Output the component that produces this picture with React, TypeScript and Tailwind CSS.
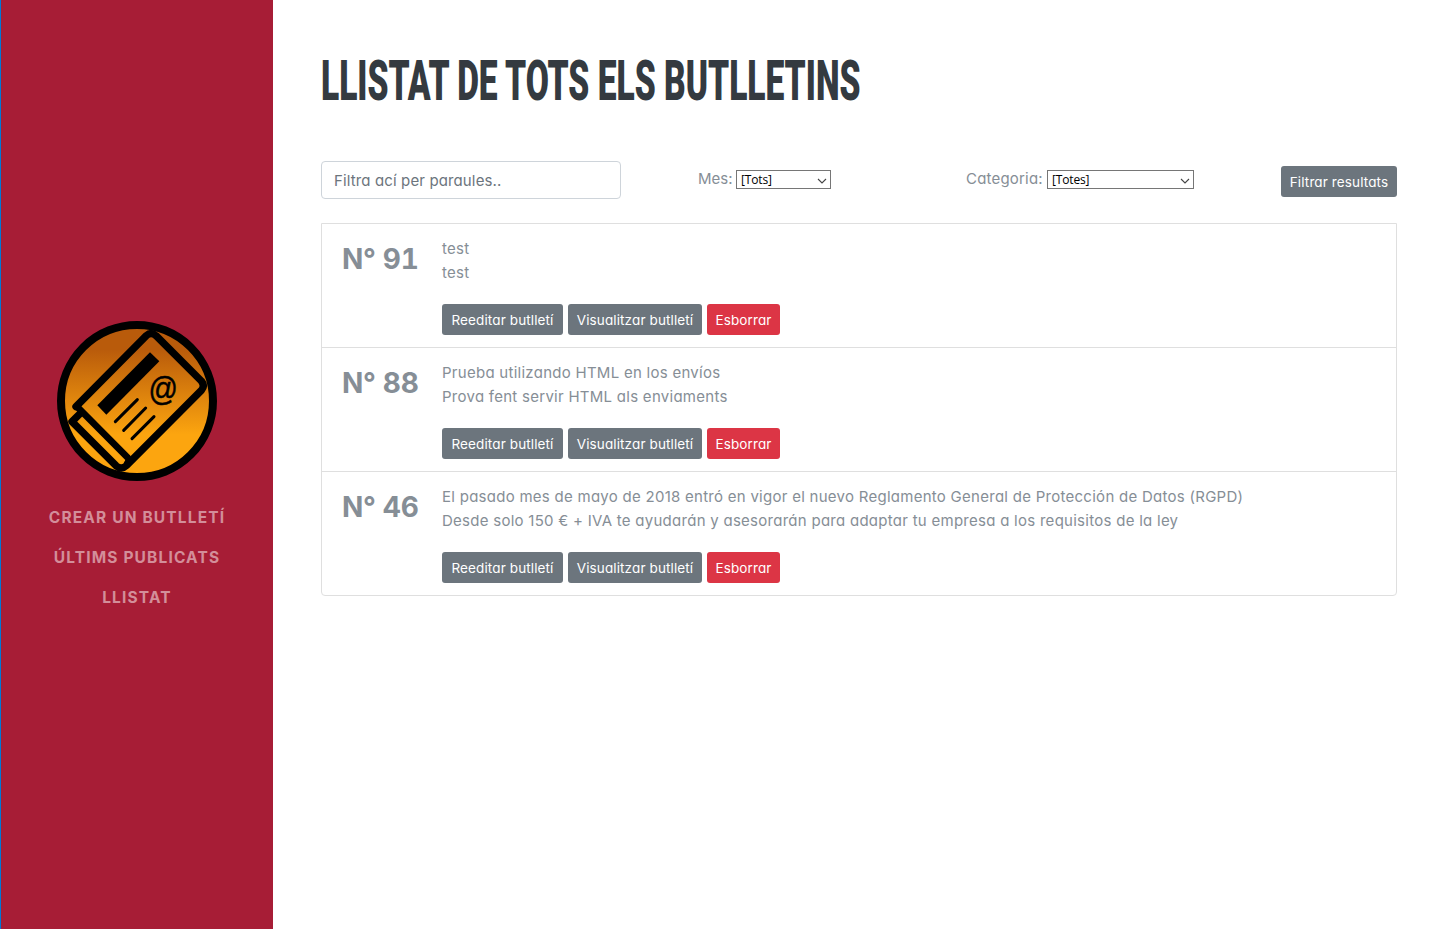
import React from "react";

const issues = [
  { id: 91, lines: ["test", "test"] },
  { id: 88, lines: ["Prueba utilizando HTML en los envíos", "Prova fent servir HTML als enviaments"] },
  {
    id: 46,
    lines: [
      "El pasado mes de mayo de 2018 entró en vigor el nuevo Reglamento General de Protección de Datos (RGPD)",
      "Desde solo 150 € + IVA te ayudarán y asesorarán para adaptar tu empresa a los requisitos de la ley",
    ],
  },
];

function Logo() {
  return (
    <svg className="block size-40" viewBox="21 18 480 480" fill="none" stroke="#000" aria-hidden="true">
      <defs>
        <linearGradient id="gold" x1="0" y1="0" x2="0" y2="1">
          <stop offset="0.16" stopColor="#b95b0b" />
          <stop offset="0.72" stopColor="#fca50f" />
          <stop offset="1" stopColor="#fca50f" />
        </linearGradient>
      </defs>
      <circle cx="261" cy="258" r="228" fill="url(#gold)" strokeWidth="24" />
      <path d="M78 275 L289 62 Q303 49 318 62 L454 198 Q466 212 454 226 L229 452 Q214 466 198 452 L66 320 L92 294" strokeWidth="22" strokeLinejoin="round" strokeLinecap="round" />
      <path d="M84 278 L233 428 Q240 436 229 449" strokeWidth="20" strokeLinejoin="round" />
      <path d="M142 271 L300 112 L328 139 L169 299 Z" fill="#000" stroke="none" />
      <path d="M196 320 L262 254 M221 346 L287 279 M246 371 L312 305" strokeWidth="9" strokeLinecap="round" />
      <text transform="translate(340 256) scale(.87 1)" fontSize="100" textAnchor="middle" fill="#000" strokeWidth="1.5" className="font-['Liberation_Sans']">@</text>
    </svg>
  );
}

function Btn({ children, className }: { children: React.ReactNode; className: string }) {
  return (
    <button className={`h-[31px] rounded-[3px] pt-px text-center text-[13.5px] leading-[30px] tracking-[0.12px] whitespace-nowrap text-white ${className}`}>
      {children}
    </button>
  );
}

function Select({ value, className }: { value: string; className: string }) {
  return (
    <button className={`flex h-[19px] items-center justify-between border border-[#767676] bg-white pr-[3px] pl-1 font-['Open_Sans',sans-serif] text-[12px] leading-[17px] tracking-[-0.15px] text-black ${className}`}>
      {value}
      <svg width="10" height="6" viewBox="0 0 10 6" className="mt-[3px]" fill="none" stroke="#444" strokeWidth="1.1">
        <path d="M1 1 L5 5 L9 1" />
      </svg>
    </button>
  );
}

export default function App() {
  return (
    <div className="flex h-[929px] w-[1445px] overflow-hidden bg-white font-['Inter',sans-serif] text-[15px] leading-6 text-[#868e96] [font-feature-settings:'cv11']">
      <aside className="flex w-[273px] shrink-0 flex-col items-center border-l border-[#0078d7] bg-[#a71d36] pt-[321px]">
        <Logo />
        <nav className="mt-[25px] flex flex-col items-center gap-4 text-[15.5px] font-bold tracking-[1.15px] whitespace-nowrap text-[#d38e9a]">
          <a>CREAR UN BUTLLETÍ</a>
          <a>ÚLTIMS PUBLICATS</a>
          <a>LLISTAT</a>
        </nav>
      </aside>
      <main className="w-[1172px] px-12 pt-12">
        <h1 className="h-[67px] w-max origin-left scale-x-[0.61] font-['Roboto',sans-serif] text-[55px] leading-[67px] font-black whitespace-nowrap text-[#343a40]">
          LLISTAT DE TOTS ELS BUTLLETINS
        </h1>
        <div className="mt-[46px] flex h-[38px] items-start">
          <input
            className="h-[38px] w-[300px] rounded border border-[#ced4da] px-3 text-[15px] tracking-[0.13px] placeholder:text-[#6c757d] placeholder:opacity-100"
            placeholder="Filtra ací per paraules.."
          />
          <label className="ml-[77px] flex w-[133px] items-center justify-between pt-1">
            <span className="pt-0.5 leading-[23px]">Mes:</span>
            <Select value="[Tots]" className="mt-[3px] w-[95px]" />
          </label>
          <label className="ml-[135px] flex w-[228px] items-center justify-between pt-1">
            <span className="pt-0.5 leading-[23px] tracking-[0.2px]">Categoria:</span>
            <Select value="[Totes]" className="mt-[3px] w-[147px]" />
          </label>
          <Btn className="mt-[5px] ml-auto w-[116px] bg-[#6c757d]">Filtrar resultats</Btn>
        </div>
        <ul className="mt-6 rounded-b border border-[#dfdfdf]">
          {issues.map((issue) => (
            <li key={issue.id} className="flex h-[124px] border-b border-[#dfdfdf] pt-[13px] pl-5 last:h-[123px] last:border-b-0">
              <h2 className="w-[100px] shrink-0 pt-[3px] text-[28px] leading-[38px] font-bold tracking-[-0.3px] whitespace-nowrap [font-feature-settings:'tnum']">N° {issue.id}</h2>
              <div>
                {issue.lines.map((line, i) => (
                  <p key={i} className="tracking-[0.27px] whitespace-nowrap">{line}</p>
                ))}
                <div className="mt-[19px] flex gap-[5px]">
                  <Btn className="w-[121px] bg-[#6c757d]">Reeditar butlletí</Btn>
                  <Btn className="w-[134px] bg-[#6c757d]">Visualitzar butlletí</Btn>
                  <Btn className="w-[73px] bg-[#dc3545]">Esborrar</Btn>
                </div>
              </div>
            </li>
          ))}
        </ul>
      </main>
    </div>
  );
}
